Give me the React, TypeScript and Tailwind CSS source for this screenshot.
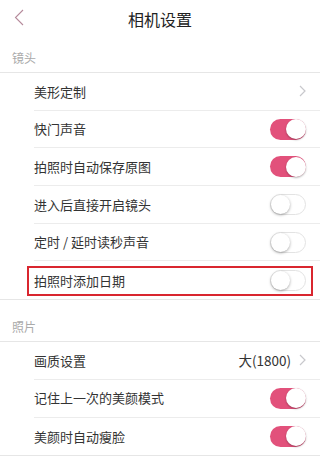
import React from "react";

const FONT = { fontFamily: '"Noto Sans CJK SC", "Liberation Sans", sans-serif' };

function Toggle({ on }: { on: boolean }) {
  return (
    <div
      className={
        on
          ? "relative w-[36px] h-[21px] rounded-full bg-[#e2517b]"
          : "relative w-[36px] h-[21px] rounded-full bg-white border border-[#e3e3e3]"
      }
    >
      <div
        className={
          on
            ? "absolute top-[0.5px] right-[0.5px] w-[20px] h-[20px] rounded-full bg-white shadow-[0_1px_2px_rgba(0,0,0,0.3)]"
            : "absolute top-0 left-0 w-[19px] h-[19px] rounded-full bg-white shadow-[0_1px_3px_rgba(0,0,0,0.35)]"
        }
      />
    </div>
  );
}

function Chevron() {
  return (
    <svg width="7" height="12" viewBox="0 0 7 12" className="ml-[8px]">
      <path d="M1 1l5 5-5 5" fill="none" stroke="#c8c8cc" strokeWidth="1.2" />
    </svg>
  );
}

type Row = { label: string; kind: "link" | "on" | "off"; value?: string; mark?: boolean };

function SettingRow({ row, last }: { row: Row; last: boolean }) {
  return (
    <div className="relative h-[37.7px] pl-[34px]">
      <div
        className={
          "flex items-center h-full pr-[14px] " + (last ? "" : "border-b border-[#ececec]")
        }
      >
        <span className="flex-1 text-[13px] text-[#333]">{row.label}</span>
        {row.kind === "link" ? (
          <div className="flex items-center">
            {row.value && <span className="text-[13.5px] text-[#333]">{row.value}</span>}
            <Chevron />
          </div>
        ) : (
          <Toggle on={row.kind === "on"} />
        )}
      </div>
      {row.mark && (
        <div className="absolute left-[27px] right-[7px] top-[5px] h-[30px] border-2 border-[#d9262f]" />
      )}
    </div>
  );
}

const lens: Row[] = [
  { label: "美形定制", kind: "link" },
  { label: "快门声音", kind: "on" },
  { label: "拍照时自动保存原图", kind: "on" },
  { label: "进入后直接开启镜头", kind: "off" },
  { label: "定时 / 延时读秒声音", kind: "off" },
  { label: "拍照时添加日期", kind: "off", mark: true },
];

const photo: Row[] = [
  { label: "画质设置", kind: "link", value: "大(1800)" },
  { label: "记住上一次的美颜模式", kind: "on" },
  { label: "美颜时自动瘦脸", kind: "on" },
];

export default function App() {
  return (
    <div className="w-[320px] h-[466px] bg-white overflow-hidden" style={FONT}>
      {/* nav */}
      <div className="relative h-[37px] flex items-center justify-center">
        <svg width="10" height="17" viewBox="0 0 10 17" className="absolute left-[14px] top-[9px]">
          <path d="M9 1L1.5 8.5 9 16" fill="none" stroke="#b58a9b" strokeWidth="1.1" />
        </svg>
        <span className="text-[16px] text-[#222]">相机设置</span>
      </div>

      <div className="h-[36px] flex items-end pl-[12px] pb-[5px] border-b border-[#e6e6e6]">
        <span className="text-[12px] text-[#aaa]">镜头</span>
      </div>
      <div className="border-b border-[#e6e6e6]">
        {lens.map((r, i) => (
          <SettingRow key={r.label} row={r} last={i === lens.length - 1} />
        ))}
      </div>

      <div className="h-[42px] flex items-end pl-[12px] pb-[5px] border-b border-[#e6e6e6]">
        <span className="text-[12px] text-[#aaa]">照片</span>
      </div>
      <div className="border-b border-[#e6e6e6]">
        {photo.map((r, i) => (
          <SettingRow key={r.label} row={r} last={i === photo.length - 1} />
        ))}
      </div>
    </div>
  );
}
